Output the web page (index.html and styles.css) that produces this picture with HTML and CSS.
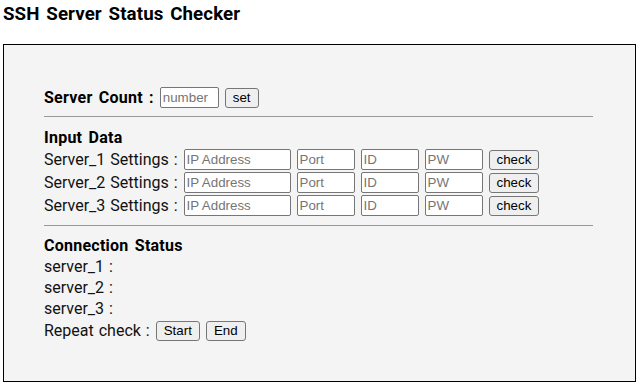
FILE: index.html
```html
<!DOCTYPE html>
<html lang="ko">
<head>
    <meta charset="UTF-8">
    <meta name="viewport" content="width=device-width, initial-scale=1.0">
    <title>SSH Server Status Checker</title>
    <link rel="stylesheet" href="styles.css">
</head>
<body>
    <h3 class="title">SSH Server Status Checker</h3>
    <div class="panel">
        <div class="row">
            <b>Server Count :</b>
            <input class="inp count" type="number" placeholder="number">
            <button class="btn" type="button">set</button>
        </div>
        <hr class="line">
        <div class="head">Input Data</div>
        <div class="rows">
            <div class="row">
                <span>Server_1 Settings :</span>
                <input class="inp ip" type="text" placeholder="IP Address">
                <input class="inp" type="text" placeholder="Port">
                <input class="inp" type="text" placeholder="ID">
                <input class="inp" type="password" placeholder="PW">
                <button class="btn" type="button">check</button>
            </div>
            <div class="row">
                <span>Server_2 Settings :</span>
                <input class="inp ip" type="text" placeholder="IP Address">
                <input class="inp" type="text" placeholder="Port">
                <input class="inp" type="text" placeholder="ID">
                <input class="inp" type="password" placeholder="PW">
                <button class="btn" type="button">check</button>
            </div>
            <div class="row">
                <span>Server_3 Settings :</span>
                <input class="inp ip" type="text" placeholder="IP Address">
                <input class="inp" type="text" placeholder="Port">
                <input class="inp" type="text" placeholder="ID">
                <input class="inp" type="password" placeholder="PW">
                <button class="btn" type="button">check</button>
            </div>
        </div>
        <hr class="line line-2">
        <div class="head">Connection Status</div>
        <div class="status">server_1 :<span id="status1"></span></div>
        <div class="status">server_2 :<span id="status2"></span></div>
        <div class="status">server_3 :<span id="status3"></span></div>
        <div class="row repeat">
            <span>Repeat check :</span>
            <button class="btn" type="button">Start</button>
            <button class="btn" type="button">End</button>
        </div>
    </div>
</body>
</html>
```

FILE: styles.css
```css
body {
    margin: 0 6px 0 3px;
    font-family: Roboto, "Noto Sans CJK KR", sans-serif;
    font-size: 16px;
    word-spacing: 1px;
    color: #111;
    background-color: #fff;
}

.title {
    margin: 0;
    font-size: 18.72px;
    font-weight: bold;
    letter-spacing: 0.1px;
    word-spacing: 2px;
    line-height: 28px;
    color: #000;
}

.panel {
    margin-top: 16px;
    border: 1px solid #000;
    background-color: #f4f4f4;
    padding: 42px 42px 40px 40px;
}

.row {
    display: flex;
    align-items: center;
    gap: 6px;
    height: 21px;
    line-height: 21px;
}

.row b,
.head {
    font-weight: bold;
    letter-spacing: 0.25px;
    word-spacing: 2px;
    color: #000;
}

.rows {
    display: flex;
    flex-direction: column;
    gap: 2px;
    margin-top: 1px;
}

.line {
    border: none;
    border-top: 1px solid #999;
    margin: 8px 0 10px 0;
}

.line-2 {
    margin: 9px 0 9px 0;
}

.head {
    height: 21px;
    line-height: 21px;
}

.status {
    height: 21px;
    line-height: 21px;
}

.repeat {
    margin-top: 1px;
}

.inp {
    box-sizing: border-box;
    width: 58px;
    height: 21px;
    margin: 0;
    padding: 1px 2px;
    border: 1px solid #767676;
    border-radius: 2px;
    background-color: #fff;
    font-family: "Liberation Sans", Arial, sans-serif;
    font-size: 13.33px;
    word-spacing: 0;
    -moz-appearance: textfield;
}

.inp::-webkit-inner-spin-button,
.inp::-webkit-outer-spin-button {
    -webkit-appearance: none;
    margin: 0;
}

.inp::placeholder {
    color: #757575;
}

.inp.count {
    width: 59px;
}

.inp.ip {
    width: 107px;
}

.btn {
    box-sizing: border-box;
    height: 20px;
    margin: 0;
    padding: 0 7px;
    border: 1px solid #767676;
    border-radius: 3px;
    background-color: #efefef;
    font-family: "Liberation Sans", Arial, sans-serif;
    font-size: 13.33px;
    word-spacing: 0;
    color: #000;
    cursor: pointer;
}

.btn:hover {
    background-color: #e5e5e5;
}
```
